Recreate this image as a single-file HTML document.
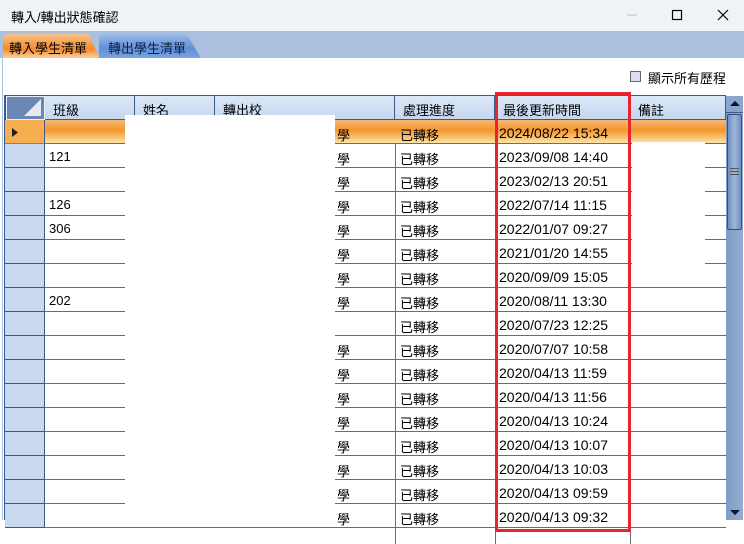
<!DOCTYPE html>
<html><head><meta charset="utf-8"><style>
*{margin:0;padding:0;box-sizing:border-box}
body{width:744px;height:520px;overflow:hidden;background:#fff;font-family:"Liberation Sans","Noto Sans CJK TC",sans-serif;font-size:13px;color:#000;position:relative}
.a{position:absolute}
.row{position:absolute;left:45px;width:681px;height:24px;border-bottom:1px solid #6d6d6d}
.rh{position:absolute;left:5px;width:40px;height:24px;background:#c9d9ef;border-bottom:1px solid #3c5a8c;border-right:1px solid #3c5a8c}
.t{position:absolute;top:4px;font-size:13px;white-space:nowrap}
.vl{position:absolute;top:96px;width:1px;height:424px;background:#6d6d6d}
.hd{position:absolute;top:96px;height:24px;background:linear-gradient(#dce8f7,#c4d7f0);border-right:1px solid #3c5a8c;border-bottom:1px solid #3c5a8c;padding:4px 0 0 8px;font-size:13px}
</style></head><body>
<div class="a" style="left:0;top:0;width:744px;height:31px;background:#eef3f8"></div>
<div class="a" style="left:11px;top:7px;font-size:13px">轉入/轉出狀態確認</div>
<svg class="a" style="left:620px;top:8px" width="120" height="16"><line x1="7" y1="7" x2="17" y2="7" stroke="#bbb"/><rect x="52.5" y="2.5" width="9" height="9" fill="none" stroke="#000" stroke-width="1.2"/><path d="M98 2L108 12M108 2L98 12" stroke="#000" stroke-width="1.2"/></svg>
<div class="a" style="left:0;top:31px;width:744px;height:27px;background:#aac0de"></div>
<div class="a" style="left:3px;top:34px;width:97px;height:25px;background:linear-gradient(#f7c48a,#f48a2c 60%,#fbd9a8);border-radius:5px 8px 0 0;clip-path:polygon(0 0,88% 0,100% 100%,0 100%)"></div>
<div class="a" style="left:9px;top:38px;font-size:13px">轉入學生清單</div>
<div class="a" style="left:99px;top:34px;width:102px;height:24px;background:linear-gradient(#9dbbe8,#5f8fd8 60%,#7aa4e3);border-radius:5px 8px 0 0;clip-path:polygon(0 0,86% 0,100% 100%,0 100%)"></div>
<div class="a" style="left:108px;top:38px;font-size:13px;color:#102040">轉出學生清單</div>
<div class="a" style="left:2px;top:58px;width:740px;height:462px;background:#fff;border-left:1px solid #aac0de"></div>
<div class="a" style="left:630px;top:71px;width:11px;height:11px;border:1px solid #666;background:#dde"></div>
<div class="a" style="left:648px;top:68px;font-size:13px">顯示所有歷程</div>
<div class="a" style="left:4px;top:95px;width:2px;height:425px;background:#3c5a8c"></div>
<div class="a" style="left:4px;top:95px;width:722px;height:1px;background:#3c5a8c"></div>
<div class="a" style="left:6px;top:96px;width:39px;height:24px;background:#6b87b5;border:1px solid #e8eef8"><div class="a" style="right:3px;bottom:3px;width:0;height:0;border-left:17px solid transparent;border-bottom:17px solid #e6e9ee"></div></div>
<div class="hd" style="left:45px;width:90px">班級</div>
<div class="hd" style="left:135px;width:80px">姓名</div>
<div class="hd" style="left:215px;width:180px">轉出校</div>
<div class="hd" style="left:395px;width:100px">處理進度</div>
<div class="hd" style="left:495px;width:135px">最後更新時間</div>
<div class="hd" style="left:630px;width:96px">備註</div>
<div class="vl" style="left:395px;top:120px"></div>
<div class="vl" style="left:495px;top:120px"></div>
<div class="vl" style="left:630px;top:120px"></div>
<div class="row" style="top:120px;background:linear-gradient(#f6b773,#f4962e 45%,#fde4a6);border-bottom:1px solid #6d6d6d"></div>
<div class="rh" style="top:120px;background:#f7ae50;border-bottom:1px solid #d86d10"></div>
<svg class="a" style="left:11px;top:127px" width="8" height="11"><path d="M1 1L7 5.5L1 10Z" fill="#222"/></svg>
<div id="rows"></div>
<script>
var d=[["","學","2024/08/22 15:34"],["121","學","2023/09/08 14:40"],["","學","2023/02/13 20:51"],["126","學","2022/07/14 11:15"],["306","學","2022/01/07 09:27"],["","學","2021/01/20 14:55"],["","學","2020/09/09 15:05"],["202","學","2020/08/11 13:30"],["","","2020/07/23 12:25"],["","學","2020/07/07 10:58"],["","學","2020/04/13 11:59"],["","學","2020/04/13 11:56"],["","學","2020/04/13 10:24"],["","學","2020/04/13 10:07"],["","學","2020/04/13 10:03"],["","學","2020/04/13 09:59"],["","學","2020/04/13 09:32"]];
var h="";d.forEach(function(r,i){var y=120+i*24;
if(i>0){h+='<div class="row" style="top:'+y+'px"></div><div class="rh" style="top:'+y+'px"></div>';}
h+='<div class="t" style="left:49px;top:'+(y+5)+'px">'+r[0]+'</div><div class="t" style="left:337px;top:'+(y+5)+'px">'+r[1]+'</div><div class="t" style="left:400px;top:'+(y+5)+'px">已轉移</div><div class="t" style="left:499px;top:'+(y+5)+'px;font-size:14px">'+r[2]+'</div>';});
document.getElementById("rows").innerHTML=h;
</script>
<div class="a" style="left:125px;top:115px;width:210px;height:405px;background:#fff"></div>
<div class="a" style="left:632px;top:142px;width:73px;height:145px;background:#fff"></div>
<div class="a" style="left:726px;top:96px;width:17px;height:424px;background:linear-gradient(90deg,#7f9cc6,#93aed3)"></div>
<div class="a" style="left:726px;top:96px;width:17px;height:17px;background:#8aa6cf;border-bottom:1px solid #3c5a8c"></div>
<svg class="a" style="left:729px;top:100px" width="12" height="8"><path d="M1 6L6 1L11 6Z" fill="#112"/></svg>
<div class="a" style="left:727px;top:114px;width:15px;height:116px;background:linear-gradient(90deg,#6f8fbf,#9db7dc,#6f8fbf);border:1px solid #2f4f80;border-radius:2px"></div>
<div class="a" style="left:730px;top:168px;width:9px;height:7px;border-top:1px solid #555;border-bottom:1px solid #555"><div style="margin-top:2px;height:1px;background:#555"></div></div>
<svg class="a" style="left:729px;top:509px" width="12" height="8"><path d="M1 1L6 6L11 1Z" fill="#112"/></svg>
<div class="a" style="left:495px;top:92px;width:136px;height:440px;border:3px solid #e8242c"></div>
</body></html>
